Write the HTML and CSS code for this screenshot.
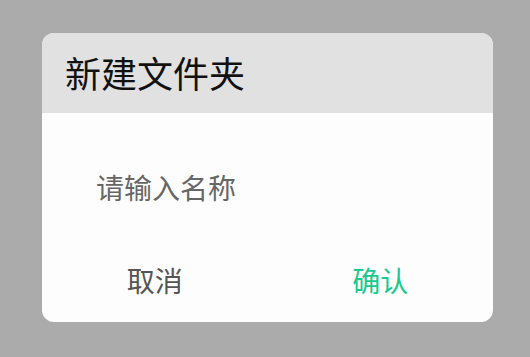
FILE: index.html
```html
<!DOCTYPE html>
<html lang="zh">
<head>
<meta charset="utf-8">
<link rel="stylesheet" href="styles.css">
</head>
<body>
<div class="dialog">
  <div class="header"><span class="title">新建文件夹</span></div>
  <div class="content">
    <div class="input">请输入名称</div>
    <div class="actions">
      <div class="btn cancel">取消</div>
      <div class="btn ok">确认</div>
    </div>
  </div>
</div>
</body>
</html>
```

FILE: styles.css
```css
html, body {
  margin: 0;
  padding: 0;
  background: #ababab;
  width: 530px;
  height: 357px;
  overflow: hidden;
  font-family: "Noto Sans CJK SC", "Noto Sans", sans-serif;
}
.dialog {
  margin: 33px 0 0 42px;
  width: 451px;
  height: 289px;
  border-radius: 12px;
  overflow: hidden;
  background: #fdfdfd;
  display: flex;
  flex-direction: column;
}
.header {
  height: 80px;
  box-sizing: border-box;
  padding: 0 0 3px 23px;
  background: #e1e1e1;
  display: flex;
  align-items: center;
}
.title {
  font-size: 36px;
  color: #111;
  line-height: 40px;
}
.content {
  display: flex;
  flex-direction: column;
}
.input {
  margin-top: 54px;
  padding-left: 54px;
  font-size: 28px;
  line-height: 40px;
  color: #666;
}
.actions {
  margin-top: 53px;
  display: flex;
}
.btn {
  flex: 1;
  text-align: center;
  font-size: 28px;
  line-height: 40px;
}
.cancel { color: #555; }
.ok { color: #19c98f; }
```
